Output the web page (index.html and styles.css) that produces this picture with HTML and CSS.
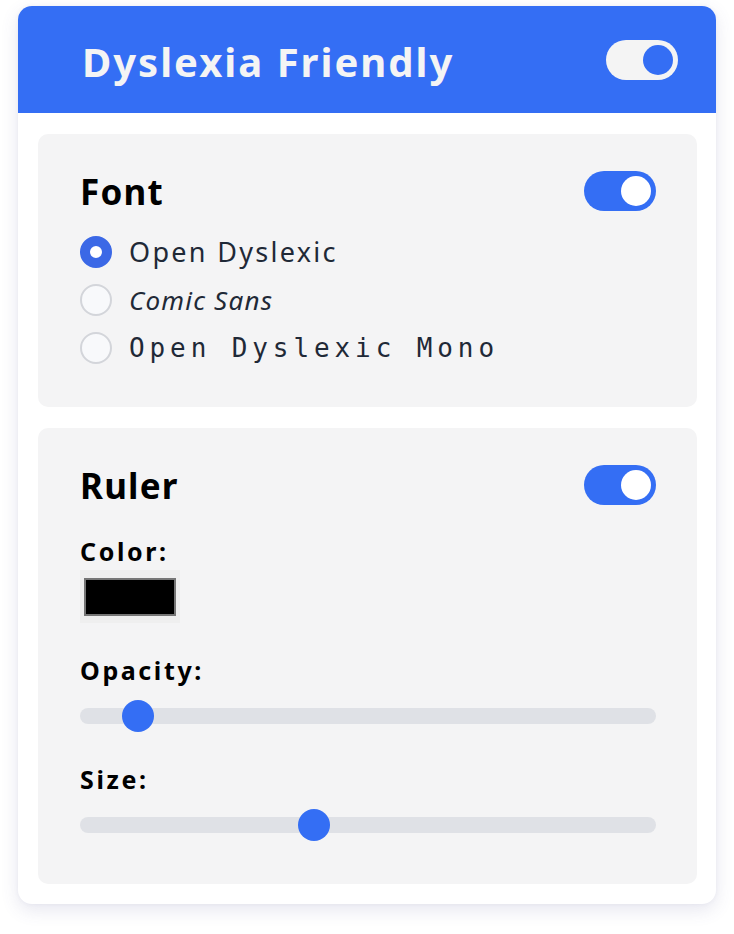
FILE: index.html
```html
<!DOCTYPE html>
<html lang="en">
<head>
<meta charset="utf-8">
<title>Dyslexia Friendly</title>
<link rel="stylesheet" href="styles.css">
</head>
<body>
<div class="card">
  <header class="card-header">
    <h1 class="title">Dyslexia Friendly</h1>
    <span class="switch switch-light"><span class="knob"></span></span>
  </header>
  <div class="card-body">
    <section class="panel panel-font">
      <div class="panel-head">
        <h2 class="panel-title">Font</h2>
        <span class="switch"><span class="knob"></span></span>
      </div>
      <div class="radios">
        <label class="radio-row"><span class="radio checked"></span><span class="rlabel f-open">Open Dyslexic</span></label>
        <label class="radio-row"><span class="radio"></span><span class="rlabel f-comic">Comic Sans</span></label>
        <label class="radio-row"><span class="radio"></span><span class="rlabel f-mono">Open Dyslexic Mono</span></label>
      </div>
    </section>
    <section class="panel panel-ruler">
      <div class="panel-head">
        <h2 class="panel-title">Ruler</h2>
        <span class="switch"><span class="knob"></span></span>
      </div>
      <div class="field-label label-color">Color:</div>
      <div class="color-input"><span class="swatch"></span></div>
      <div class="field-label label-gap">Opacity:</div>
      <div class="slider"><span class="track"></span><span class="thumb" style="left: 42px"></span></div>
      <div class="field-label label-gap">Size:</div>
      <div class="slider"><span class="track"></span><span class="thumb" style="left: 218px"></span></div>
    </section>
  </div>
</div>
</body>
</html>
```

FILE: styles.css
```css
* { box-sizing: border-box; }
html, body { margin: 0; padding: 0; background: #ffffff; }
body {
  font-family: "Noto Sans", "DejaVu Sans", sans-serif;
  padding: 6px 18px 30px 18px;
}
.card {
  width: 698px;
  background: #ffffff;
  border-radius: 14px;
  overflow: hidden;
  box-shadow: 0 6px 18px rgba(80, 80, 140, 0.14), 0 0 4px rgba(80, 80, 140, 0.06);
}
.card-header {
  height: 107px;
  background: #346ef4;
  display: flex;
  align-items: center;
  justify-content: space-between;
  padding: 0 38px 0 64px;
}
.title {
  margin: 0;
  color: #f4f4f4;
  font-size: 40px;
  font-weight: 700;
  letter-spacing: 2px;
  line-height: 1;
  position: relative;
  top: 2px;
}
.switch {
  width: 72px;
  height: 40px;
  border-radius: 20px;
  background: #346ef4;
  display: flex;
  align-items: center;
  justify-content: flex-end;
  padding: 0 5px;
}
.switch .knob {
  width: 30px;
  height: 30px;
  border-radius: 50%;
  background: #ffffff;
}
.switch-light { background: #f4f4f4; }
.switch-light .knob { background: #346ef4; }

.card-body {
  padding: 21px 19px 20px 20px;
  display: flex;
  flex-direction: column;
  gap: 21px;
}
.panel {
  background: #f4f4f5;
  border-radius: 10px;
  padding: 37px 41px 43px 42px;
}
.panel-head {
  display: flex;
  align-items: center;
  justify-content: space-between;
  height: 40px;
}
.panel-title {
  margin: 0;
  font-size: 35px;
  font-weight: 700;
  color: #000;
  letter-spacing: 1.2px;
  line-height: 1;
}
.radios {
  margin-top: 25px;
  display: flex;
  flex-direction: column;
  gap: 16px;
}
.radio-row {
  display: flex;
  align-items: center;
  height: 32px;
}
.radio {
  width: 32px;
  height: 32px;
  border-radius: 50%;
  background: #f8f9fb;
  border: 2px solid #d3d5da;
  flex: none;
}
.radio.checked {
  background: #ffffff;
  border: 10px solid #3b68e6;
}
.rlabel {
  margin-left: 17px;
  color: #1f2937;
  font-size: 27px;
  line-height: 32px;
}
.f-open {
  letter-spacing: 2.3px;
}
.f-comic {
  font-style: italic;
  font-size: 26px;
  letter-spacing: 1.2px;
}
.f-mono {
  font-family: "DejaVu Sans Mono", monospace;
  font-size: 26px;
  letter-spacing: 4.9px;
}
.field-label {
  font-size: 25px;
  font-weight: 700;
  color: #000;
  letter-spacing: 2.6px;
  line-height: 28px;
}
.label-color { margin-top: 32px; }
.label-gap { margin-top: 33px; }
.color-input {
  margin-top: 5px;
  width: 100px;
  height: 53px;
  background: #efefef;
  padding: 8px 4px 7px 4px;
}
.swatch {
  display: block;
  width: 92px;
  height: 38px;
  background: #000;
  border: 2px solid #767676;
}
.slider {
  position: relative;
  margin-top: 16px;
  height: 32px;
  width: 576px;
}
.track {
  position: absolute;
  left: 0;
  right: 0;
  top: 8px;
  height: 16px;
  border-radius: 8px;
  background: #dfe1e6;
}
.thumb {
  position: absolute;
  top: 0;
  width: 32px;
  height: 32px;
  border-radius: 50%;
  background: #346ef4;
}
```
